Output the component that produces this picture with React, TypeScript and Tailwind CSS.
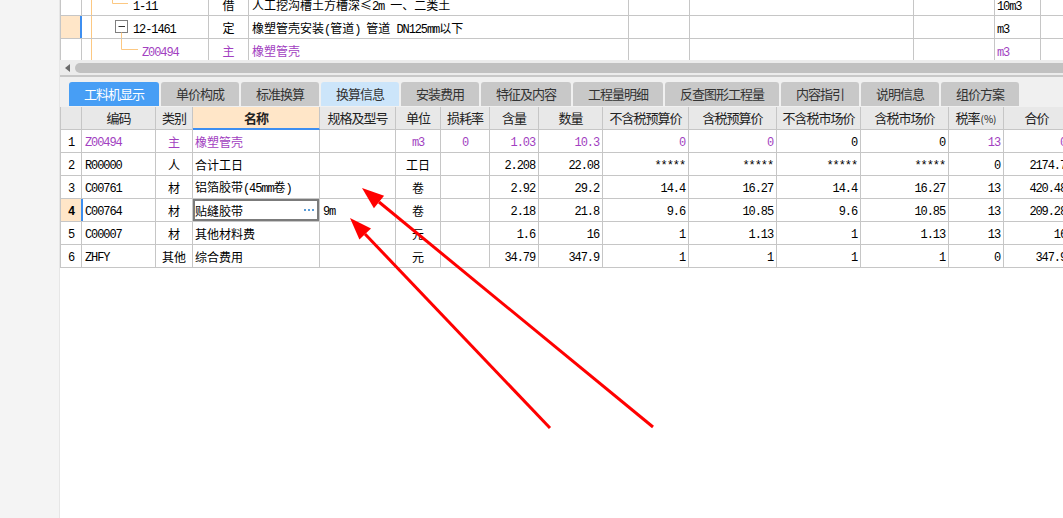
import React from "react";

const MONO = "font-['Liberation_Mono',monospace] text-[12px] tracking-[-1.1px]";
const CJK = "font-['Noto_Sans_CJK_SC',sans-serif] text-[12px]";

function Txt({ s, bold = false }: { s: string; bold?: boolean }) {
  const parts = s.match(/[\x20-\x7e]+|[^\x20-\x7e]+/g) || [];
  return (
    <span className={bold ? "whitespace-pre font-bold" : "whitespace-pre"}>
      {parts.map((p, i) =>
        /^[\x20-\x7e]+$/.test(p) ? (
          <span key={i} className={MONO}>
            {p}
          </span>
        ) : (
          <span key={i} className={CJK}>
            {p}
          </span>
        )
      )}
    </span>
  );
}

const ORANGE = "#fcc882";

function TreeCell({ kind }: { kind: 0 | 1 | 2 }) {
  return (
    <svg width="126" height="22" className="absolute left-0 top-0">
      <line x1="9.5" y1="0" x2="9.5" y2="22" stroke={ORANGE} strokeWidth="1" />
      {kind === 0 && (
        <>
          <line x1="30.5" y1="0" x2="30.5" y2="10.5" stroke={ORANGE} strokeWidth="1" />
          <line x1="30.5" y1="10.5" x2="46" y2="10.5" stroke={ORANGE} strokeWidth="1" />
        </>
      )}
      {kind === 1 && (
        <>
          <rect x="33.5" y="4.5" width="12" height="12" fill="white" stroke="#7f7f7f" strokeWidth="1" />
          <line x1="36.5" y1="10.5" x2="43" y2="10.5" stroke="#333" strokeWidth="1" />
          <line x1="39.5" y1="16.5" x2="39.5" y2="22" stroke={ORANGE} strokeWidth="1" />
        </>
      )}
      {kind === 2 && (
        <>
          <line x1="39.5" y1="0" x2="39.5" y2="10.5" stroke={ORANGE} strokeWidth="1" />
          <line x1="39.5" y1="10.5" x2="56" y2="10.5" stroke={ORANGE} strokeWidth="1" />
        </>
      )}
    </svg>
  );
}

const topRows: { kind: 0 | 1 | 2; code: string; type: string; name: string; unit: string; purple: boolean; sel: boolean }[] = [
  { kind: 0, code: "1-11", type: "借", name: "人工挖沟槽土方槽深≤2m 一、二类土", unit: "10m3", purple: false, sel: false },
  { kind: 1, code: "12-1461", type: "定", name: "橡塑管壳安装(管道) 管道 DN125mm以下", unit: "m3", purple: false, sel: true },
  { kind: 2, code: "Z00494", type: "主", name: "橡塑管壳", unit: "m3", purple: true, sel: false },
];

function TopRow({ r }: { r: (typeof topRows)[number] }) {
  const color = r.purple ? "text-[#a23fc1]" : "text-black";
  const pl = r.kind === 2 ? "pl-[60px]" : "pl-[51px]";
  return (
    <div className={"h-[23px] flex border-l border-b border-[#c6c6c6] leading-[22px] " + color}>
      {r.sel ? (
        <div className="w-[21px] shrink-0 bg-[#ffe6c8] border-r-2 border-[#3d8ef0]" />
      ) : (
        <div className="w-[21px] shrink-0 bg-white border-r border-[#c6c6c6]" />
      )}
      <div className={"w-[127px] shrink-0 border-r border-[#c6c6c6] relative " + pl}>
        <TreeCell kind={r.kind} />
        <span className="relative">
          <Txt s={r.code} />
        </span>
      </div>
      <div className="w-[40px] shrink-0 border-r border-[#c6c6c6] text-center">
        <Txt s={r.type} />
      </div>
      <div className="w-[380px] shrink-0 border-r border-[#c6c6c6] pl-[3px] overflow-hidden">
        <Txt s={r.name} />
      </div>
      <div className="w-[61px] shrink-0 border-r border-[#c6c6c6]" />
      <div className="w-[224px] shrink-0 border-r border-[#c6c6c6]" />
      <div className="w-[81px] shrink-0 border-r border-[#c6c6c6]" />
      <div className="w-[46px] shrink-0 border-r border-[#c6c6c6] pl-[2px]">
        <Txt s={r.unit} />
      </div>
      <div className="w-[79px] shrink-0 border-r border-[#c6c6c6]" />
    </div>
  );
}

const tabs: { label: string; w: string; style: string }[] = [
  { label: "工料机显示", w: "w-[90px]", style: "bg-[#479ef5] text-white" },
  { label: "单价构成", w: "w-[78px]", style: "bg-[#c8c8c8] text-[#333]" },
  { label: "标准换算", w: "w-[78px]", style: "bg-[#c8c8c8] text-[#333]" },
  { label: "换算信息", w: "w-[78px]", style: "bg-[#cce5fa] text-[#333]" },
  { label: "安装费用", w: "w-[78px]", style: "bg-[#c8c8c8] text-[#333]" },
  { label: "特征及内容", w: "w-[90px]", style: "bg-[#c8c8c8] text-[#333]" },
  { label: "工程量明细", w: "w-[90px]", style: "bg-[#c8c8c8] text-[#333]" },
  { label: "反查图形工程量", w: "w-[114px]", style: "bg-[#c8c8c8] text-[#333]" },
  { label: "内容指引", w: "w-[78px]", style: "bg-[#c8c8c8] text-[#333]" },
  { label: "说明信息", w: "w-[78px]", style: "bg-[#c8c8c8] text-[#333]" },
  { label: "组价方案", w: "w-[78px]", style: "bg-[#c8c8c8] text-[#333]" },
];

const W = [
  "w-[21px]",
  "w-[74px]",
  "w-[37px]",
  "w-[127px]",
  "w-[76px]",
  "w-[45px]",
  "w-[49px]",
  "w-[49px]",
  "w-[64px]",
  "w-[86px]",
  "w-[88px]",
  "w-[84px]",
  "w-[88px]",
  "w-[55px]",
  "w-[66px]",
];

const ALIGN = [
  "justify-center",
  "justify-start pl-[3px]",
  "justify-center",
  "justify-start pl-[2px]",
  "justify-start pl-[3px]",
  "justify-center",
  "justify-center",
  "justify-end pr-[3px]",
  "justify-end pr-[3px]",
  "justify-end pr-[3px]",
  "justify-end pr-[3px]",
  "justify-end pr-[3px]",
  "justify-end pr-[3px]",
  "justify-end pr-[3px]",
  "justify-end pr-[3px]",
];

const headers = [
  "",
  "编码",
  "类别",
  "名称",
  "规格及型号",
  "单位",
  "损耗率",
  "含量",
  "数量",
  "不含税预算价",
  "含税预算价",
  "不含税市场价",
  "含税市场价",
  "税率",
  "合价",
];

type Cell = [string, boolean];
const P = true;
const B = false;
const rows: Cell[][] = [
  [["1", B], ["Z00494", P], ["主", P], ["橡塑管壳", P], ["", B], ["m3", P], ["0", P], ["1.03", P], ["10.3", P], ["0", P], ["0", P], ["0", B], ["0", B], ["13", P], ["0", P]],
  [["2", B], ["R00000", B], ["人", B], ["合计工日", B], ["", B], ["工日", B], ["", B], ["2.208", B], ["22.08", B], ["*****", B], ["*****", B], ["*****", B], ["*****", B], ["0", B], ["2174.7", B]],
  [["3", B], ["C00761", B], ["材", B], ["铝箔胶带(45mm卷)", B], ["", B], ["卷", B], ["", B], ["2.92", B], ["29.2", B], ["14.4", B], ["16.27", B], ["14.4", B], ["16.27", B], ["13", B], ["420.48", B]],
  [["4", B], ["C00764", B], ["材", B], ["贴缝胶带", B], ["9m", B], ["卷", B], ["", B], ["2.18", B], ["21.8", B], ["9.6", B], ["10.85", B], ["9.6", B], ["10.85", B], ["13", B], ["209.28", B]],
  [["5", B], ["C00007", B], ["材", B], ["其他材料费", B], ["", B], ["元", B], ["", B], ["1.6", B], ["16", B], ["1", B], ["1.13", B], ["1", B], ["1.13", B], ["13", B], ["16", B]],
  [["6", B], ["ZHFY", B], ["其他", B], ["综合费用", B], ["", B], ["元", B], ["", B], ["34.79", B], ["347.9", B], ["1", B], ["1", B], ["1", B], ["1", B], ["0", B], ["347.9", B]],
];

function DataRow({ r, idx }: { r: Cell[]; idx: number }) {
  const sel = idx === 3;
  return (
    <div className="h-[23px] flex border-l border-b border-[#c6c6c6] leading-[22px]">
      {r.map(([t, purple], i) => {
        const color = purple ? "text-[#a23fc1]" : "text-black";
        let extra = "bg-white border-r border-[#c6c6c6]";
        if (sel && i === 0) extra = "bg-[#ffe6c8] border-r border-[#3d8ef0]";
        if (sel && i === 1) extra = "bg-white border-r border-[#c6c6c6] shadow-[inset_1px_0_0_#3d8ef0]";
        if (sel && i === 3) extra = "bg-white border-r border-[#c6c6c6] shadow-[inset_0_0_0_2px_#7b7b7b] pr-[5px]";
        return (
          <div key={i} className={"h-full shrink-0 flex items-center overflow-hidden " + W[i] + " " + ALIGN[i] + " " + extra + " " + color}>
            <Txt s={t} bold={sel && i === 0} />
            {sel && i === 3 && (
              <span className="ml-auto flex gap-[2px]">
                <span className="w-[2px] h-[2px] bg-[#5b9bd5]" />
                <span className="w-[2px] h-[2px] bg-[#5b9bd5]" />
                <span className="w-[2px] h-[2px] bg-[#5b9bd5]" />
              </span>
            )}
          </div>
        );
      })}
    </div>
  );
}

export default function App() {
  return (
    <div className="relative w-[1063px] h-[518px] overflow-hidden bg-white flex text-black">
      <div className="w-[60px] shrink-0 h-full bg-[#f4f4f4] border-r border-[#e6e6e6]" />
      <div className="flex-1 min-w-0 flex flex-col">
        <div className="h-[60px] overflow-hidden shrink-0">
          <div className="-mt-[7px]">
            {topRows.map((r, i) => (
              <TopRow key={i} r={r} />
            ))}
          </div>
        </div>
        <div className="h-[15px] shrink-0 bg-[#ececec] flex items-center pl-[5px] gap-[5px]">
          <svg width="5" height="8" className="shrink-0">
            <polygon points="5,0 5,8 0,4" fill="#6b6b6b" />
          </svg>
          <div className="h-[10px] flex-1 rounded-l-[5px] bg-[#c1c1c1]" />
        </div>
        <div className="h-[2px] shrink-0 bg-[#c8c8c8]" />
        <div className="h-[30px] shrink-0 bg-[#f0f0f0] flex items-end gap-[2px] pl-[9px] pb-[1px]">
          {tabs.map((t) => (
            <div
              key={t.label}
              className={
                "h-[24px] shrink-0 rounded-t-[3px] flex items-center justify-center font-['Noto_Sans_CJK_SC',sans-serif] text-[13px] tracking-[-1px] " +
                t.w +
                " " +
                t.style
              }
            >
              {t.label}
            </div>
          ))}
        </div>
        <div className="h-[23px] shrink-0 flex border-l border-[#c6c6c6]">
          {headers.map((h, i) => (
            <div
              key={i}
              className={
                "h-full shrink-0 flex items-center justify-center border-r border-[#c6c6c6] font-['Noto_Sans_CJK_SC',sans-serif] text-[13px] tracking-[-1px] text-[#222] whitespace-nowrap " +
                W[i] +
                " " +
                (i === 3 ? "bg-[#ffe6c8] font-bold border-b-2 border-b-[#3d8ef0]" : "bg-[#e8e8e8] border-b")
              }
            >
              {h}
              {i === 13 && <span className="text-[10px] tracking-normal ml-[1px]">(%)</span>}
            </div>
          ))}
        </div>
        {rows.map((r, i) => (
          <DataRow key={i} r={r} idx={i} />
        ))}
        <div className="flex-1 bg-white" />
      </div>
      <svg className="absolute left-0 top-0 pointer-events-none" width="1063" height="518">
        <line x1="550" y1="428" x2="365" y2="234" stroke="#ff0000" strokeWidth="3" />
        <polygon points="350,218 371,228.4 359.4,239.4" fill="#ff0000" />
        <line x1="653" y1="427" x2="379" y2="202" stroke="#ff0000" strokeWidth="3" />
        <polygon points="362,188 384.1,195.8 373.9,208.2" fill="#ff0000" />
      </svg>
    </div>
  );
}
